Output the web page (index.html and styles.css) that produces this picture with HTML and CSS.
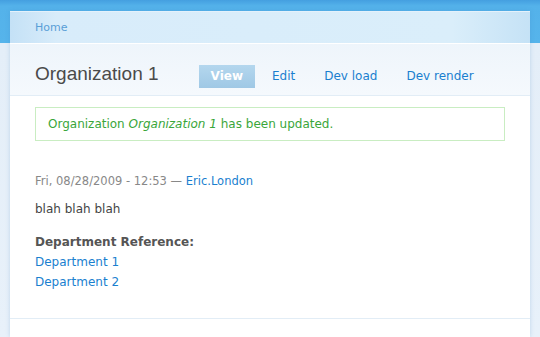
FILE: index.html
```html
<!DOCTYPE html>
<html lang="en">
<head>
    <meta charset="UTF-8">
    <title>Organization 1</title>
    <link rel="stylesheet" href="styles.css">
</head>
<body>

    <div class="page">
        <!-- Breadcrumb -->
        <div class="breadcrumb">
            <a href="#">Home</a>
        </div>

        <!-- Title and tabs -->
        <div class="header">
            <h1>Organization 1</h1>
            <ul class="tabs">
                <li><a href="#" class="active">View</a></li>
                <li><a href="#">Edit</a></li>
                <li><a href="#">Dev load</a></li>
                <li><a href="#">Dev render</a></li>
            </ul>
        </div>

        <div class="content">
            <div class="messages">
                Organization <em>Organization 1</em> has been updated.
            </div>

            <div class="submitted">
                Fri, 08/28/2009 - 12:53 — <a href="#">Eric.London</a>
            </div>

            <p class="body-text">blah blah blah</p>

            <div class="field">
                <div class="field-label">Department Reference:</div>
                <div><a href="#">Department 1</a></div>
                <div><a href="#">Department 2</a></div>
            </div>
        </div>
        <div class="footer"></div>
    </div>

</body>
</html>
```

FILE: styles.css
```css
body {
    margin: 0;
    padding: 0;
    font-family: 'DejaVu Sans', Verdana, sans-serif;
    font-size: 12px;
    color: #444;
    height: 337px;
    overflow: hidden;
    background: linear-gradient(to bottom, #449fe0 0, #54b2ea 6px, #56b4eb 43px, #e4eef8 43px, #e8f1fa 100%);
}

a {
    color: #1a7fcf;
    text-decoration: none;
}

/* Page box */
.page {
    margin: 11px 10px 0;
    background: #fff;
    border-top: 1px solid #e4f1fb;
    box-shadow: 0 0 4px rgba(60, 130, 190, 0.25);
}

/* Breadcrumb */
.breadcrumb {
    height: 31px;
    line-height: 32px;
    padding: 0 25px;
    font-size: 11px;
    border-bottom: 1px solid #fff;
    background: linear-gradient(to right, #c4e1f6 0, #d8ecfa 9%, #daeefa 85%, #c5e2f6 100%);
}

.breadcrumb a {
    color: #5a9fd7;
}

/* Header */
.header {
    display: flex;
    align-items: baseline;
    padding: 18px 25px 7px;
    border-bottom: 1px solid #e2edf6;
    background: linear-gradient(to bottom, #eef5fb, #f5f9fd);
}

h1 {
    margin: 0 40px 0 0;
    font-family: 'Liberation Sans', Arial, sans-serif;
    font-size: 19px;
    font-weight: normal;
    line-height: 23px;
    color: #4a4a4a;
}

.tabs {
    display: flex;
    gap: 5px;
    margin: 0;
    padding: 0;
    list-style: none;
}

.tabs a {
    display: block;
    padding: 0 12px;
    height: 23px;
    line-height: 23px;
    font-size: 12px;
}

.tabs a.active {
    color: #fff;
    font-weight: bold;
    background: linear-gradient(to bottom, #b4d7ee, #9fc8e5);
}

/* Content */
.content {
    padding: 11px 25px 26px;
}

.messages {
    border: 1px solid #c9edc2;
    padding: 9px 12px;
    line-height: 14px;
    color: #3aa63a;
}

.submitted {
    margin-top: 33px;
    font-size: 11.5px;
    line-height: 14px;
    color: #888;
}

.body-text {
    margin: 14px 0 0;
    line-height: 14px;
}

.field {
    margin-top: 16px;
    line-height: 20px;
}

.field-label {
    font-weight: bold;
    color: #555;
}

.footer {
    height: 18px;
    border-top: 1px solid #e2edf6;
}
```
